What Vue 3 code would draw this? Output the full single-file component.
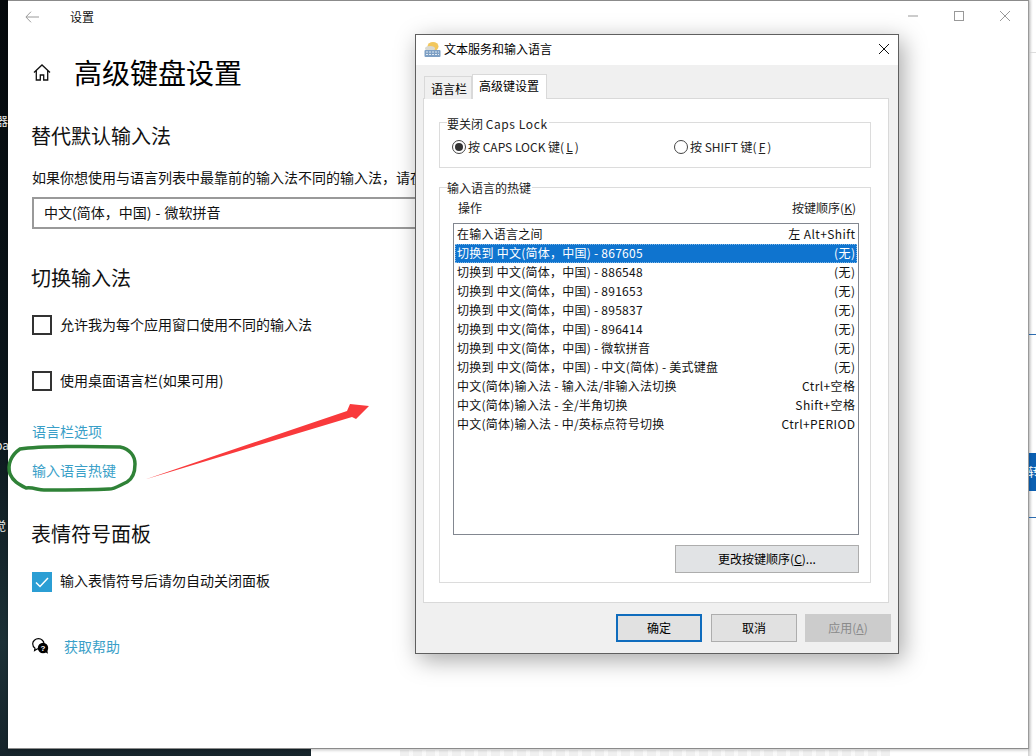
<script setup>
const rows = [
  { name: '在输入语言之间', key: '左 Alt+Shift' },
  { name: '切换到 中文(简体，中国) - 867605', key: '(无)', selected: true },
  { name: '切换到 中文(简体，中国) - 886548', key: '(无)' },
  { name: '切换到 中文(简体，中国) - 891653', key: '(无)' },
  { name: '切换到 中文(简体，中国) - 895837', key: '(无)' },
  { name: '切换到 中文(简体，中国) - 896414', key: '(无)' },
  { name: '切换到 中文(简体，中国) - 微软拼音', key: '(无)' },
  { name: '切换到 中文(简体，中国) - 中文(简体) - 美式键盘', key: '(无)' },
  { name: '中文(简体)输入法 - 输入法/非输入法切换', key: 'Ctrl+空格' },
  { name: '中文(简体)输入法 - 全/半角切换', key: 'Shift+空格' },
  { name: '中文(简体)输入法 - 中/英标点符号切换', key: 'Ctrl+PERIOD' }
]
</script>

<template>
  <div class="desktop">
    <div class="dark-side">
      <span class="edge-text e1">器.</span>
      <span class="edge-text e2">pa</span>
      <span class="edge-text e3">觉</span>
    </div>
    <div class="right-side">
      <i class="faint-line"></i>
      <i class="blue-line l1"></i>
      <b class="blue-tag">转</b>
      <i class="blue-line l2"></i>
    </div>
    <div class="bottom-smear"></div>

    <section class="settings">
      <header class="topbar">
        <svg class="back" width="14" height="12" viewBox="0 0 14 12">
          <path d="M6 .7 .9 6l5.100 5.300M1 6h13" fill="none" stroke="#9a9a9a" stroke-width="1"/>
        </svg>
        <span class="topbar-title">设置</span>
        <div class="win-controls">
          <svg width="12" height="12" viewBox="0 0 12 12"><path d="M1 6h10" stroke="#999" fill="none"/></svg>
          <svg width="12" height="12" viewBox="0 0 12 12"><rect x="1.500" y="1.500" width="9" height="9" stroke="#999" fill="none"/></svg>
          <svg width="12" height="12" viewBox="0 0 12 12"><path d="M1 1l10 10M11 1 1 11" stroke="#999" fill="none"/></svg>
        </div>
      </header>

      <div class="page-title">
        <svg class="home" width="18" height="17" viewBox="0 0 18 17">
          <path d="M1 8.400 9 1l8 7.400M3.300 6.500V16h4v-5h3.400v5h4V6.500" fill="none" stroke="#111" stroke-width="1.300"/>
        </svg>
        <h1>高级键盘设置</h1>
      </div>

      <h2 class="h-first">替代默认输入法</h2>
      <p class="desc">如果你想使用与语言列表中最靠前的输入法不同的输入法，请在</p>
      <div class="combo">中文(简体，中国) - 微软拼音</div>

      <h2 class="h-second">切换输入法</h2>
      <label class="check-row first"><span class="box"></span><span class="check-text">允许我为每个应用窗口使用不同的输入法</span></label>
      <label class="check-row next"><span class="box"></span><span class="check-text">使用桌面语言栏(如果可用)</span></label>

      <a class="link lang-bar">语言栏选项</a>
      <a class="link hotkey">输入语言热键</a>

      <h2 class="h-third">表情符号面板</h2>
      <label class="check-row emoji">
        <span class="box on">
          <svg width="20" height="20" viewBox="0 0 20 20"><path d="M4 10.500 8 14.500 16 6" fill="none" stroke="#fff" stroke-width="1.500"/></svg>
        </span>
        <span class="check-text">输入表情符号后请勿自动关闭面板</span>
      </label>

      <div class="help">
        <svg width="17" height="16" viewBox="0 0 17 16">
          <path d="M3 10.200 2.600 12.500 5.500 10.800C9 11 12 9 12 5.800 12 3 9.500.7 6.500.7 3.300.7.700 3 .7 5.800.7 7.700 1.600 9.200 3 10.200Z" fill="#fff" stroke="#000" stroke-width="1.200"/>
          <circle cx="11" cy="10" r="5.200" fill="#000"/>
          <path d="m13 14 3 1.800-.8-3.800z" fill="#000"/>
          <text x="11" y="13" text-anchor="middle" class="help-q">?</text>
        </svg>
        <a class="link">获取帮助</a>
      </div>
    </section>

    <svg class="annotation" width="1036" height="756" viewBox="0 0 1036 756">
      <path d="M20 449C40 446 90 446 120 447C130 449 135 456 135 464C135 473 132 479 127 482C120 485 115 489 109 489C90 490 60 490 44 490C38 490 33 487 26 488C18 484 13 481 10 474C7 465 11 455 20 449Z" fill="none" stroke="#2f8237" stroke-width="3.500"/>
      <path d="M145 479.500 347 411 350 404 369 406 356 419 352 417Z" fill="#f93a3c"/>
    </svg>

    <section class="dialog">
      <header class="dialog-title">
        <svg width="17" height="17" viewBox="0 0 17 17">
          <ellipse cx="9" cy="5.500" rx="5.500" ry="4.500" fill="#f2c75c"/>
          <ellipse cx="6" cy="7.500" rx="5" ry="2.500" fill="#d9d9d2"/>
          <rect x=".5" y="9" width="16" height="7" rx="1" fill="#7d9fc4"/>
          <path d="M2 11h13M2 13.500h13" stroke="#dfe9f2" stroke-dasharray="2 1"/>
        </svg>
        <span>文本服务和输入语言</span>
        <svg class="dialog-close" width="12" height="12" viewBox="0 0 12 12">
          <path d="M1 1l10 10M11 1 1 11" stroke="#111" fill="none"/>
        </svg>
      </header>

      <div class="dialog-body">
        <div class="tabs">
          <span class="tab">语言栏</span>
          <span class="tab active">高级键设置</span>
        </div>
        <div class="panel">
          <div class="group caps">
            <div class="legend">要关闭 <span class="wide">Caps Lock</span></div>
            <div class="radios">
              <label class="radio r1"><span class="dot on"></span>按 CAPS LOCK 键(<u>L</u>)</label>
              <label class="radio"><span class="dot"></span>按 SHIFT 键(<u>F</u>)</label>
            </div>
          </div>

          <div class="group hotkeys">
            <div class="legend">输入语言的热键</div>
            <div class="list-head">
              <span>操作</span>
              <span>按键顺序(<u>K</u>)</span>
            </div>
            <div class="list">
              <div v-for="row in rows" :key="row.name" class="row" :class="{ selected: row.selected }">
                <span class="row-name">{{ row.name }}</span>
                <span class="row-key">{{ row.key }}</span>
              </div>
            </div>
            <div class="change-wrap">
              <button class="btn change">更改按键顺序(<u>C</u>)...</button>
            </div>
          </div>
        </div>

        <footer class="actions">
          <button class="btn primary">确定</button>
          <button class="btn plain">取消</button>
          <button class="btn disabled">应用(<u>A</u>)</button>
        </footer>
      </div>
    </section>
  </div>
</template>

<style>
html, body { margin: 0; padding: 0; background: #fff; }
</style>

<style scoped>
* { box-sizing: border-box; }
.desktop {
  position: relative;
  width: 1036px;
  height: 756px;
  overflow: hidden;
  background: #fff;
  font-family: "Noto Sans CJK SC", "Liberation Sans", sans-serif;
  color: #000;
}
.dark-side {
  position: absolute;
  left: 0;
  top: 0;
  width: 311px;
  height: 756px;
  background: linear-gradient(180deg, #05090c 0%, #0b161c 55%, #1c3036 85%, #16242b 100%);
  overflow: hidden;
}
.edge-text {
  position: absolute;
  color: #e8e8e8;
  font-size: 12px;
  line-height: 14px;
  white-space: nowrap;
}
.e1 { left: -4px; top: 114px; }
.e2 { left: -5px; top: 438px; }
.e3 { left: -6px; top: 519px; }
.right-side {
  position: absolute;
  left: 1028px;
  top: 0;
  width: 8px;
  height: 756px;
  background: linear-gradient(90deg, #cfcfcf 0, #efefef 3px, #fff 5px);
}
.faint-line { position: absolute; left: 0; top: 52px; width: 8px; height: 1px; background: #ddd; }
.blue-line { position: absolute; left: 0; width: 8px; height: 1px; background: #2c6cb0; }
.l1 { top: 334px; }
.l2 { top: 517px; }
.blue-tag {
  position: absolute;
  left: 0;
  top: 453px;
  width: 8px;
  height: 38px;
  background: #0b5fb1;
  color: #fff;
  font-size: 12px;
  font-weight: 400;
  line-height: 38px;
  overflow: hidden;
}
.bottom-smear {
  position: absolute;
  left: 400px;
  top: 750px;
  width: 490px;
  height: 6px;
  background: repeating-linear-gradient(90deg, #e6e6e6 0 9px, #f6f6f6 9px 13px);
  opacity: .6;
}

.settings {
  position: absolute;
  left: 8px;
  top: 0;
  width: 1021px;
  height: 749px;
  padding-left: 24px;
  background: #fff;
  border-top: 1px solid #8b8b8b;
  border-right: 1px solid #9a9a9a;
  border-bottom: 1px solid #8b8b8b;
  box-shadow: 0 1px 3px rgba(0,0,0,.25);
}
.topbar {
  display: flex;
  align-items: center;
  height: 32px;
  margin-left: -24px;
  padding-left: 17px;
  font-size: 12px;
}
.topbar-title { margin: 0 0 2px 31px; color: #111; }
.win-controls {
  display: flex;
  gap: 34px;
  margin-left: auto;
  padding-right: 17px;
  margin-top: -3px;
}
.page-title {
  display: flex;
  align-items: center;
  height: 40px;
  margin-top: 19px;
}
.home { margin-left: 1px; }
h1 {
  margin: 0 0 0 23px;
  font-size: 28px;
  line-height: 40px;
  font-weight: 400;
  color: #000;
}
h2 {
  margin: 0 0 0 -1px;
  font-size: 20px;
  line-height: 28px;
  font-weight: 400;
  color: #111;
}
.h-first { margin-top: 30px; }
.h-second { margin-top: 35px; }
.h-third { margin-top: 40px; }
.desc {
  margin: 17px 0 0;
  font-size: 14px;
  line-height: 20px;
  white-space: nowrap;
  color: #111;
}
.combo {
  width: 460px;
  height: 32px;
  margin-top: 10px;
  padding-left: 10px;
  border: 2px solid #999;
  font-size: 14px;
  line-height: 26px;
  word-spacing: 1px;
  color: #111;
}
.check-row {
  display: flex;
  align-items: center;
  gap: 8px;
  height: 20px;
  font-size: 14px;
  line-height: 20px;
  color: #111;
}
.check-text { margin-bottom: 2px; }
.check-row.first { margin-top: 23px; }
.check-row.next { margin-top: 36px; }
.check-row.emoji { margin-top: 24px; }
.emoji .check-text { margin-bottom: 4px; }
.box {
  flex: none;
  width: 20px;
  height: 20px;
  border: 2px solid #333;
  display: block;
}
.box.on { border: 0; background: #2b9ed4; }
.box svg { display: block; }
.link {
  display: block;
  font-size: 14px;
  line-height: 20px;
  color: #3a9fc8;
}
.lang-bar { margin-top: 30px; }
.hotkey { margin-top: 19px; }
.help {
  display: flex;
  align-items: center;
  gap: 15px;
  height: 20px;
  margin-top: 44px;
}
.help .link { margin-bottom: 1px; }
.help-q { font: 700 8px "Liberation Sans", sans-serif; fill: #fff; }

.annotation { position: absolute; left: 0; top: 0; pointer-events: none; }

.dialog {
  position: absolute;
  left: 415px;
  top: 34px;
  width: 484px;
  height: 620px;
  border: 1px solid #5f5f5f;
  background: #f0f0f0;
  box-shadow: 4px 6px 22px rgba(0,0,0,.35);
  font-size: 12px;
  line-height: 16px;
  color: #000;
}
.dialog-title {
  display: flex;
  align-items: center;
  gap: 3px;
  height: 30px;
  padding: 0 8px 2px 8px;
  background: #fff;
}
.dialog-close { margin-left: auto; margin-right: 0; }
.dialog-body { padding: 9px 9px 0 7px; }
.tabs {
  display: flex;
  align-items: flex-end;
  height: 25px;
  margin-bottom: -1px;
  position: relative;
  z-index: 1;
}
.tab {
  height: 23px;
  margin-left: 1px;
  padding: 4px 3px 0 7px;
  background: #f0f0f0;
  border: 1px solid #d9d9d9;
  border-bottom: 0;
  width: 48px;
}
.tab.active {
  height: 25px;
  width: 75px;
  margin-left: 0;
  padding: 3px 0 0 6px;
  background: #fff;
}
.tab:first-child { padding-left: 6px; }
.panel {
  width: 466px;
  height: 505px;
  padding: 23px 17px 0 15px;
  background: #fff;
  border: 1px solid #d9d9d9;
}
.group { border: 1px solid #dcdcdc; }
.legend {
  width: fit-content;
  margin: -8px 0 0 7px;
  padding: 0 1px 0 0;
  height: 16px;
  background: #fff;
  color: #222;
  white-space: nowrap;
}
.wide { letter-spacing: .6px; }
.caps { height: 46px; }
.caps .legend { margin-top: -7px; }
.hotkeys { height: 396px; margin-top: 19px; }
.radios { display: flex; margin-top: 7px; padding-left: 12px; }
.radio { display: flex; align-items: center; gap: 2px; color: #222; white-space: nowrap; }
.r1 { width: 222px; }
.dot {
  width: 14px;
  height: 14px;
  border: 1px solid #444;
  border-radius: 50%;
  background: #fff;
  display: block;
  position: relative;
}
.dot.on::after {
  content: "";
  position: absolute;
  left: 2px;
  top: 2px;
  width: 8px;
  height: 8px;
  border-radius: 50%;
  background: #333;
}
.list-head {
  display: flex;
  justify-content: space-between;
  margin: 4px 14px 0 18px;
  height: 16px;
  color: #222;
}
.list {
  width: 406px;
  height: 312px;
  margin: 7px 0 0 13px;
  padding: 1px;
  border: 1px solid #828790;
  background: #fff;
}
.row {
  display: flex;
  justify-content: space-between;
  height: 19px;
  padding: 0 2px;
  line-height: 18px;
  color: #111;
  white-space: nowrap;
}
.row-name { letter-spacing: .25px; }
.row-key { letter-spacing: .4px; margin-right: -.4px; }
.row.selected { background: #0f74cf; color: #fff; outline: 1px dotted #7fb6e6; outline-offset: -1px; }
.change-wrap { display: flex; justify-content: flex-end; margin: 10px 11px 0 0; }
.btn {
  display: block;
  font: inherit;
  line-height: 16px;
  padding: 0;
  color: #000;
  background: #e1e1e1;
  border: 1px solid #adadad;
}
.change { width: 184px; height: 28px; background: #e1e3e5; }
.actions {
  display: flex;
  justify-content: flex-end;
  gap: 8px;
  margin-top: 11px;
  margin-right: -2px;
}
.actions .btn { width: 86px; height: 28px; }
.primary { border: 2px solid #0f6cbd; margin-right: 1px; }
.disabled { background: #cccccc; border-color: #cccccc; color: #8a8a8a; }
</style>
